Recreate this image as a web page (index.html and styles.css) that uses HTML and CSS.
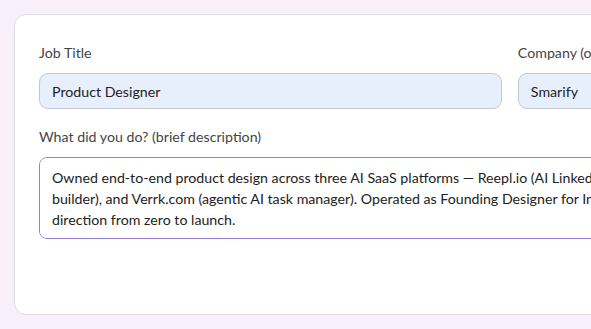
FILE: index.html
```html
<!DOCTYPE html>
<html lang="en">
<head>
  <meta charset="UTF-8" />
  <meta name="viewport" content="width=device-width, initial-scale=1.0" />
  <title>Experience</title>
  <link rel="stylesheet" href="styles.css">
</head>
<body>
  <div class="card">
    <div class="row">
      <div class="field">
        <label class="label" for="jobTitle">Job Title</label>
        <input id="jobTitle" class="input" type="text" value="Product Designer" />
      </div>
      <div class="field">
        <label class="label" for="company">Company (optional)</label>
        <input id="company" class="input" type="text" value="Smarify" />
      </div>
    </div>

    <div class="field">
      <label class="label" for="desc">What did you do? (brief description)</label>
      <textarea id="desc" class="textarea" rows="3">Owned end-to-end product design across three AI SaaS platforms — Reepl.io (AI LinkedIn content tool), Inscribe (AI resume builder), and Verrk.com (agentic AI task manager). Operated as Founding Designer for Inscribe, shaping its product and brand direction from zero to launch.</textarea>
    </div>
  </div>
</body>
</html>
```

FILE: styles.css
```css
body {
  margin: 0;
  padding: 14px;
  background: #f9eefc;
  font-family: 'Lato', sans-serif;
  color: #333;
  overflow: hidden;
}

.card {
  width: 876px;
  box-sizing: border-box;
  min-height: 301px;
  padding: 28px 24px 24px;
  background: #fff;
  border: 1px solid #dedbe3;
  border-radius: 12px;
}

.row {
  display: grid;
  grid-template-columns: 4fr 3fr;
  gap: 16px;
  margin-bottom: 18px;
}

.field {
  display: flex;
  flex-direction: column;
}

.label {
  font-size: 14.2px;
  line-height: 20px;
  color: #444;
  margin-bottom: 10px;
}

.input,
.textarea {
  font-family: 'Lato', sans-serif;
  font-size: 14.2px;
  color: #222;
  box-sizing: border-box;
  outline: none;
}

.input {
  height: 36px;
  padding: 0 12px;
  background: #e8effc;
  border: 1px solid #c5c7d0;
  border-radius: 9px;
}

.textarea {
  height: 82px;
  padding: 9px 12px;
  line-height: 21px;
  background: #fff;
  border: 1px solid #9a7fd6;
  border-radius: 8px;
  resize: none;
}
```
